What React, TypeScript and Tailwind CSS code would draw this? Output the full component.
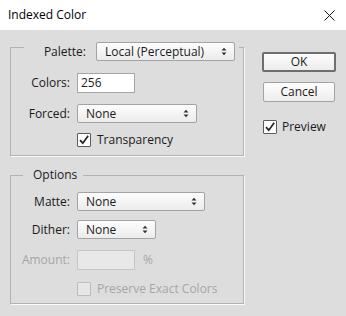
import React from "react";

const font = { fontFamily: '"Open Sans", "Noto Sans", sans-serif' };

const Arrows = () => (
  <svg width="6" height="9" viewBox="0 0 6 9" className="shrink-0">
    <path d="M0.5 3.5 L3 0.8 L5.5 3.5 Z" fill="#333" />
    <path d="M0.5 5.5 L3 8.2 L5.5 5.5 Z" fill="#333" />
  </svg>
);

const Select = ({ value, width }: { value: string; width: string }) => (
  <div
    className={`${width} h-[19px] flex items-center justify-between pl-[8px] pr-[7px] border border-[#a3a3a3] rounded-[2px] bg-gradient-to-b from-[#fdfdfd] to-[#ececec] text-[12px] text-[#1b1b1b] leading-none`}
  >
    <span>{value}</span>
    <Arrows />
  </div>
);

const Checkbox = ({ checked, disabled }: { checked?: boolean; disabled?: boolean }) => (
  <div
    className={
      disabled
        ? "w-[14px] h-[14px] border border-[#bdbdbd] bg-[#e6e6e6] rounded-[1px]"
        : "w-[14px] h-[14px] border border-[#5c5c5c] bg-white rounded-[1px] flex items-center justify-center"
    }
  >
    {checked && (
      <svg width="12" height="12" viewBox="0 0 12 12">
        <path d="M2 6.2 L4.8 9.2 L10.2 1.8" fill="none" stroke="#222" strokeWidth="1.7" />
      </svg>
    )}
  </div>
);

const Label = ({ children, disabled }: { children: React.ReactNode; disabled?: boolean }) => (
  <span
    className={`w-[59px] text-right text-[12px] ${disabled ? "text-[#a6a6a6]" : "text-[#1b1b1b]"}`}
  >
    {children}
  </span>
);

export default function App() {
  return (
    <div style={font} className="w-[346px] h-[316px] bg-[#dddddd] flex flex-col overflow-hidden">
      <div className="h-[30px] bg-white flex items-center justify-between pl-[8px] pr-[11px] shrink-0">
        <span className="text-[12px] text-black">Indexed Color</span>
        <svg width="11" height="11" viewBox="0 0 11 11">
          <path d="M0.5 0.5 L10.5 10.5 M10.5 0.5 L0.5 10.5" stroke="#111" strokeWidth="1" />
        </svg>
      </div>

      <div className="flex pt-[12px] pl-[10px]">
        <div className="flex flex-col w-[234px]">
          <fieldset className="border border-[#b3b3b3] shadow-[1px_1px_0_#fafafa] p-0 pb-[8px] m-0 min-w-0">
            <legend className="ml-[13px] h-[10px] p-0">
              <div className="flex items-start pr-[4px]">
                <span className="w-[62px] h-[19px] flex items-center justify-end text-[12px] text-[#1b1b1b]">
                  Palette:
                </span>
                <div className="ml-[10px]">
                  <Select value="Local (Perceptual)" width="w-[139px]" />
                </div>
              </div>
            </legend>
            <div className="flex items-center mt-[21px] gap-[7px]">
              <Label>Colors:</Label>
              <div className="w-[58px] h-[20px] border border-[#a5a5a5] bg-white flex items-center pl-[3px] text-[12px] text-[#1b1b1b]">
                256
              </div>
            </div>
            <div className="flex items-center mt-[11px] gap-[7px]">
              <Label>Forced:</Label>
              <Select value="None" width="w-[120px]" />
            </div>
            <div className="flex items-center mt-[9px] ml-[66px] gap-[6px] h-[15px]">
              <Checkbox checked />
              <span className="text-[12px] text-[#1b1b1b]">Transparency</span>
            </div>
          </fieldset>

          <fieldset className="mt-[11px] border border-[#b3b3b3] shadow-[1px_1px_0_#fafafa] p-0 pb-[7px] m-0 min-w-0">
            <legend className="ml-[12px] pl-[10px] pr-[6px] text-[12px] leading-[16px] text-[#1b1b1b]">
              Options
            </legend>
            <div className="flex items-center mt-[9px] gap-[7px]">
              <Label>Matte:</Label>
              <Select value="None" width="w-[128px]" />
            </div>
            <div className="flex items-center mt-[9px] gap-[7px]">
              <Label>Dither:</Label>
              <Select value="None" width="w-[79px]" />
            </div>
            <div className="flex items-center mt-[11px] gap-[7px]">
              <Label disabled>Amount:</Label>
              <div className="w-[58px] h-[20px] border border-[#c6c6c6] bg-[#e8e8e8]" />
              <span className="ml-[1px] text-[12px] text-[#a6a6a6]">%</span>
            </div>
            <div className="flex items-center mt-[12px] ml-[66px] gap-[6px] h-[14px]">
              <Checkbox disabled />
              <span className="text-[12px] text-[#a6a6a6]">Preserve Exact Colors</span>
            </div>
          </fieldset>
        </div>

        <div className="flex flex-col ml-[18px] mt-[10px]">
          <button className="w-[74px] h-[20px] border-2 border-[#6e6e6e] rounded-[2px] bg-gradient-to-b from-[#fdfdfd] to-[#ededed] text-[12px] leading-none text-[#1b1b1b]">
            OK
          </button>
          <button className="mt-[10px] ml-[1px] w-[72px] h-[20px] border border-[#a3a3a3] rounded-[2px] bg-gradient-to-b from-[#fdfdfd] to-[#ededed] text-[12px] leading-none text-[#1b1b1b]">
            Cancel
          </button>
          <div className="flex items-center mt-[18px] ml-[1px] gap-[5px] h-[14px]">
            <Checkbox checked />
            <span className="text-[12px] text-[#1b1b1b]">Preview</span>
          </div>
        </div>
      </div>
    </div>
  );
}
